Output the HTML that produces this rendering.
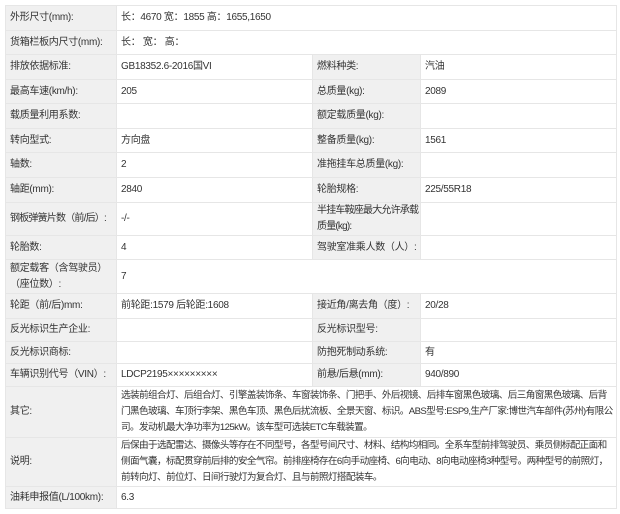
<!DOCTYPE html>
<html><head><meta charset="utf-8"><style>
body{margin:0;background:#fff;font-family:"Liberation Sans","Noto Sans CJK SC",sans-serif;font-size:10px;color:#333;}
table{position:absolute;left:5px;top:5px;width:611px;border-collapse:collapse;table-layout:fixed;}
td{border:1px solid #e6e6e6;padding:0 0 0 4px;vertical-align:middle;line-height:16px;overflow:hidden;white-space:nowrap;letter-spacing:-0.3px;}
td.l{background:#f0f0f0;}
td.w{letter-spacing:-0.6px;font-size:9.6px;}
.n{letter-spacing:-0.8px;}
</style></head><body>
<table>
<colgroup><col style="width:111px"><col style="width:196px"><col style="width:108px"><col style="width:196px"></colgroup>
<tr style="height:25px"><td class="l">外形尺寸(mm):</td><td colspan="3">长：4670 宽：1855 高：1655,1650</td></tr>
<tr style="height:24px"><td class="l">货箱栏板内尺寸(mm):</td><td colspan="3">长： 宽： 高：</td></tr>
<tr style="height:25px"><td class="l">排放依据标准:</td><td>GB18352.6-2016国VI</td><td class="l">燃料种类:</td><td>汽油</td></tr>
<tr style="height:24px"><td class="l">最高车速(km/h):</td><td>205</td><td class="l">总质量(kg):</td><td>2089</td></tr>
<tr style="height:25px"><td class="l">载质量利用系数:</td><td></td><td class="l">额定载质量(kg):</td><td></td></tr>
<tr style="height:24px"><td class="l">转向型式:</td><td>方向盘</td><td class="l">整备质量(kg):</td><td>1561</td></tr>
<tr style="height:25px"><td class="l">轴数:</td><td>2</td><td class="l">准拖挂车总质量(kg):</td><td></td></tr>
<tr style="height:25px"><td class="l">轴距(mm):</td><td>2840</td><td class="l">轮胎规格:</td><td>225/55R18</td></tr>
<tr style="height:33px"><td class="l n">钢板弹簧片数（前/后）:</td><td>-/-</td><td class="l n">半挂车鞍座最大允许承载<br>质量(kg):</td><td></td></tr>
<tr style="height:24px"><td class="l">轮胎数:</td><td>4</td><td class="l">驾驶室准乘人数（人）:</td><td></td></tr>
<tr style="height:34px"><td class="l">额定载客（含驾驶员）<br>（座位数）:</td><td colspan="3">7</td></tr>
<tr style="height:25px"><td class="l">轮距（前/后)mm:</td><td>前轮距:1579 后轮距:1608</td><td class="l">接近角/离去角（度）:</td><td>20/28</td></tr>
<tr style="height:23px"><td class="l">反光标识生产企业:</td><td></td><td class="l">反光标识型号:</td><td></td></tr>
<tr style="height:22px"><td class="l">反光标识商标:</td><td></td><td class="l">防抱死制动系统:</td><td>有</td></tr>
<tr style="height:23px"><td class="l">车辆识别代号（VIN）:</td><td>LDCP2195×××××××××</td><td class="l">前悬/后悬(mm):</td><td>940/890</td></tr>
<tr style="height:51px"><td class="l">其它:</td><td colspan="3" class="w">选装前组合灯、后组合灯、引擎盖装饰条、车窗装饰条、门把手、外后视镜、后排车窗黑色玻璃、后三角窗黑色玻璃、后背<br>门黑色玻璃、车顶行李架、黑色车顶、黑色后扰流板、全景天窗、标识。ABS型号:ESP9,生产厂家:博世汽车部件(苏州)有限公<br>司。发动机最大净功率为125kW。该车型可选装ETC车载装置。</td></tr>
<tr style="height:49px"><td class="l">说明:</td><td colspan="3" class="w">后保由于选配雷达、摄像头等存在不同型号，各型号间尺寸、材料、结构均相同。全系车型前排驾驶员、乘员侧标配正面和<br>侧面气囊，标配贯穿前后排的安全气帘。前排座椅存在6向手动座椅、6向电动、8向电动座椅3种型号。两种型号的前照灯，<br>前转向灯、前位灯、日间行驶灯为复合灯、且与前照灯搭配装车。</td></tr>
<tr style="height:22px"><td class="l">油耗申报值(L/100km):</td><td colspan="3">6.3</td></tr>
</table>
</body></html>
